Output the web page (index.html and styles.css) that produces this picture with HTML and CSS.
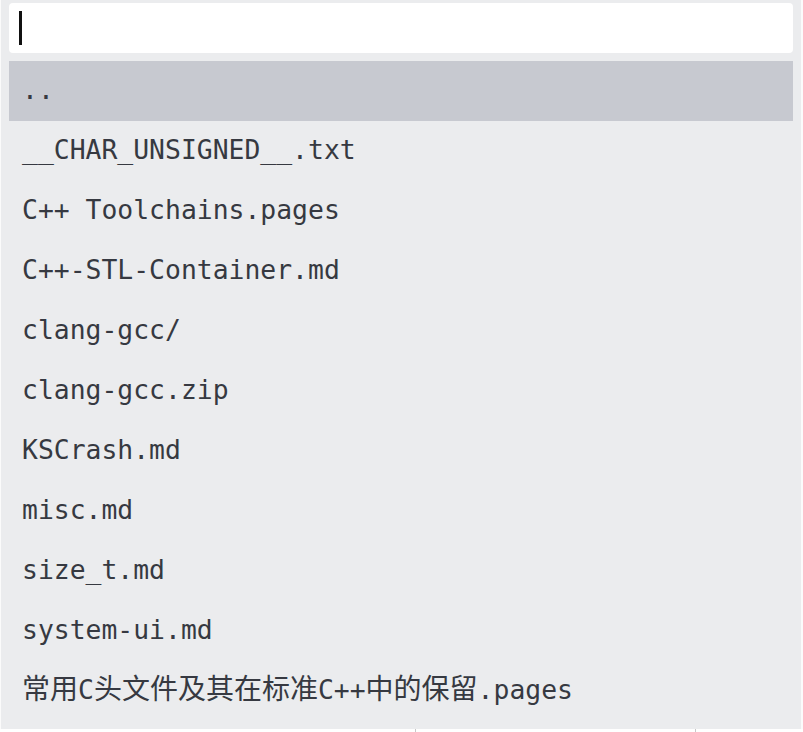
FILE: index.html
```html
<!DOCTYPE html>
<html>
<head>
<meta charset="utf-8">
<link rel="stylesheet" href="styles.css">
</head>
<body>
<div class="panel">
  <div class="search"><span class="caret"></span></div>
  <ul class="list">
    <li class="item selected">..</li>
    <li class="item">__CHAR_UNSIGNED__.txt</li>
    <li class="item">C++ Toolchains.pages</li>
    <li class="item">C++-STL-Container.md</li>
    <li class="item">clang-gcc/</li>
    <li class="item">clang-gcc.zip</li>
    <li class="item">KSCrash.md</li>
    <li class="item">misc.md</li>
    <li class="item">size_t.md</li>
    <li class="item">system-ui.md</li>
    <li class="item"><span class="cjk">常用</span>C<span class="cjk">头文件及其在标准</span>C++<span class="cjk">中的保留</span>.pages</li>
  </ul>
</div>
<div class="under">
  <div class="cell c1"></div>
  <div class="cell c2"></div>
  <div class="cell c3"></div>
</div>
</body>
</html>
```
FILE: styles.css
```css
html, body {
  margin: 0;
  padding: 0;
}
body {
  background: #fbfbfb;
  width: 803px;
  height: 732px;
  overflow: hidden;
}
.panel {
  margin-left: 1px;
  width: 800px;
  box-sizing: border-box;
  background: #ebecee;
  padding: 3px 8px 8px 8px;
}
.search {
  height: 50px;
  background: #ffffff;
  border-radius: 4px;
  display: flex;
  align-items: center;
  padding-left: 10px;
}
.caret {
  display: block;
  width: 3px;
  height: 34px;
  background: #111111;
}
.list {
  list-style: none;
  margin: 8px 0 0 0;
  padding: 0;
}
.item {
  height: 60px;
  line-height: 58px;
  padding-left: 13px;
  font-family: "DejaVu Sans Mono", "Noto Sans CJK SC", monospace;
  font-size: 26.4px;
  color: #363941;
  white-space: nowrap;
}
.cjk {
  font-family: "Noto Sans CJK SC", sans-serif;
  font-size: 28px;
  line-height: 1;
}
.item.selected {
  background: #c7c9d0;
}
.under {
  display: flex;
  height: 3px;
  background: #ffffff;
}
.cell {
  height: 100%;
}
.c1 { width: 415px; }
.c2 { width: 279px; border-left: 1px solid #c8c8c8; }
.c3 { width: 107px; border-left: 1px solid #c8c8c8; }
```
